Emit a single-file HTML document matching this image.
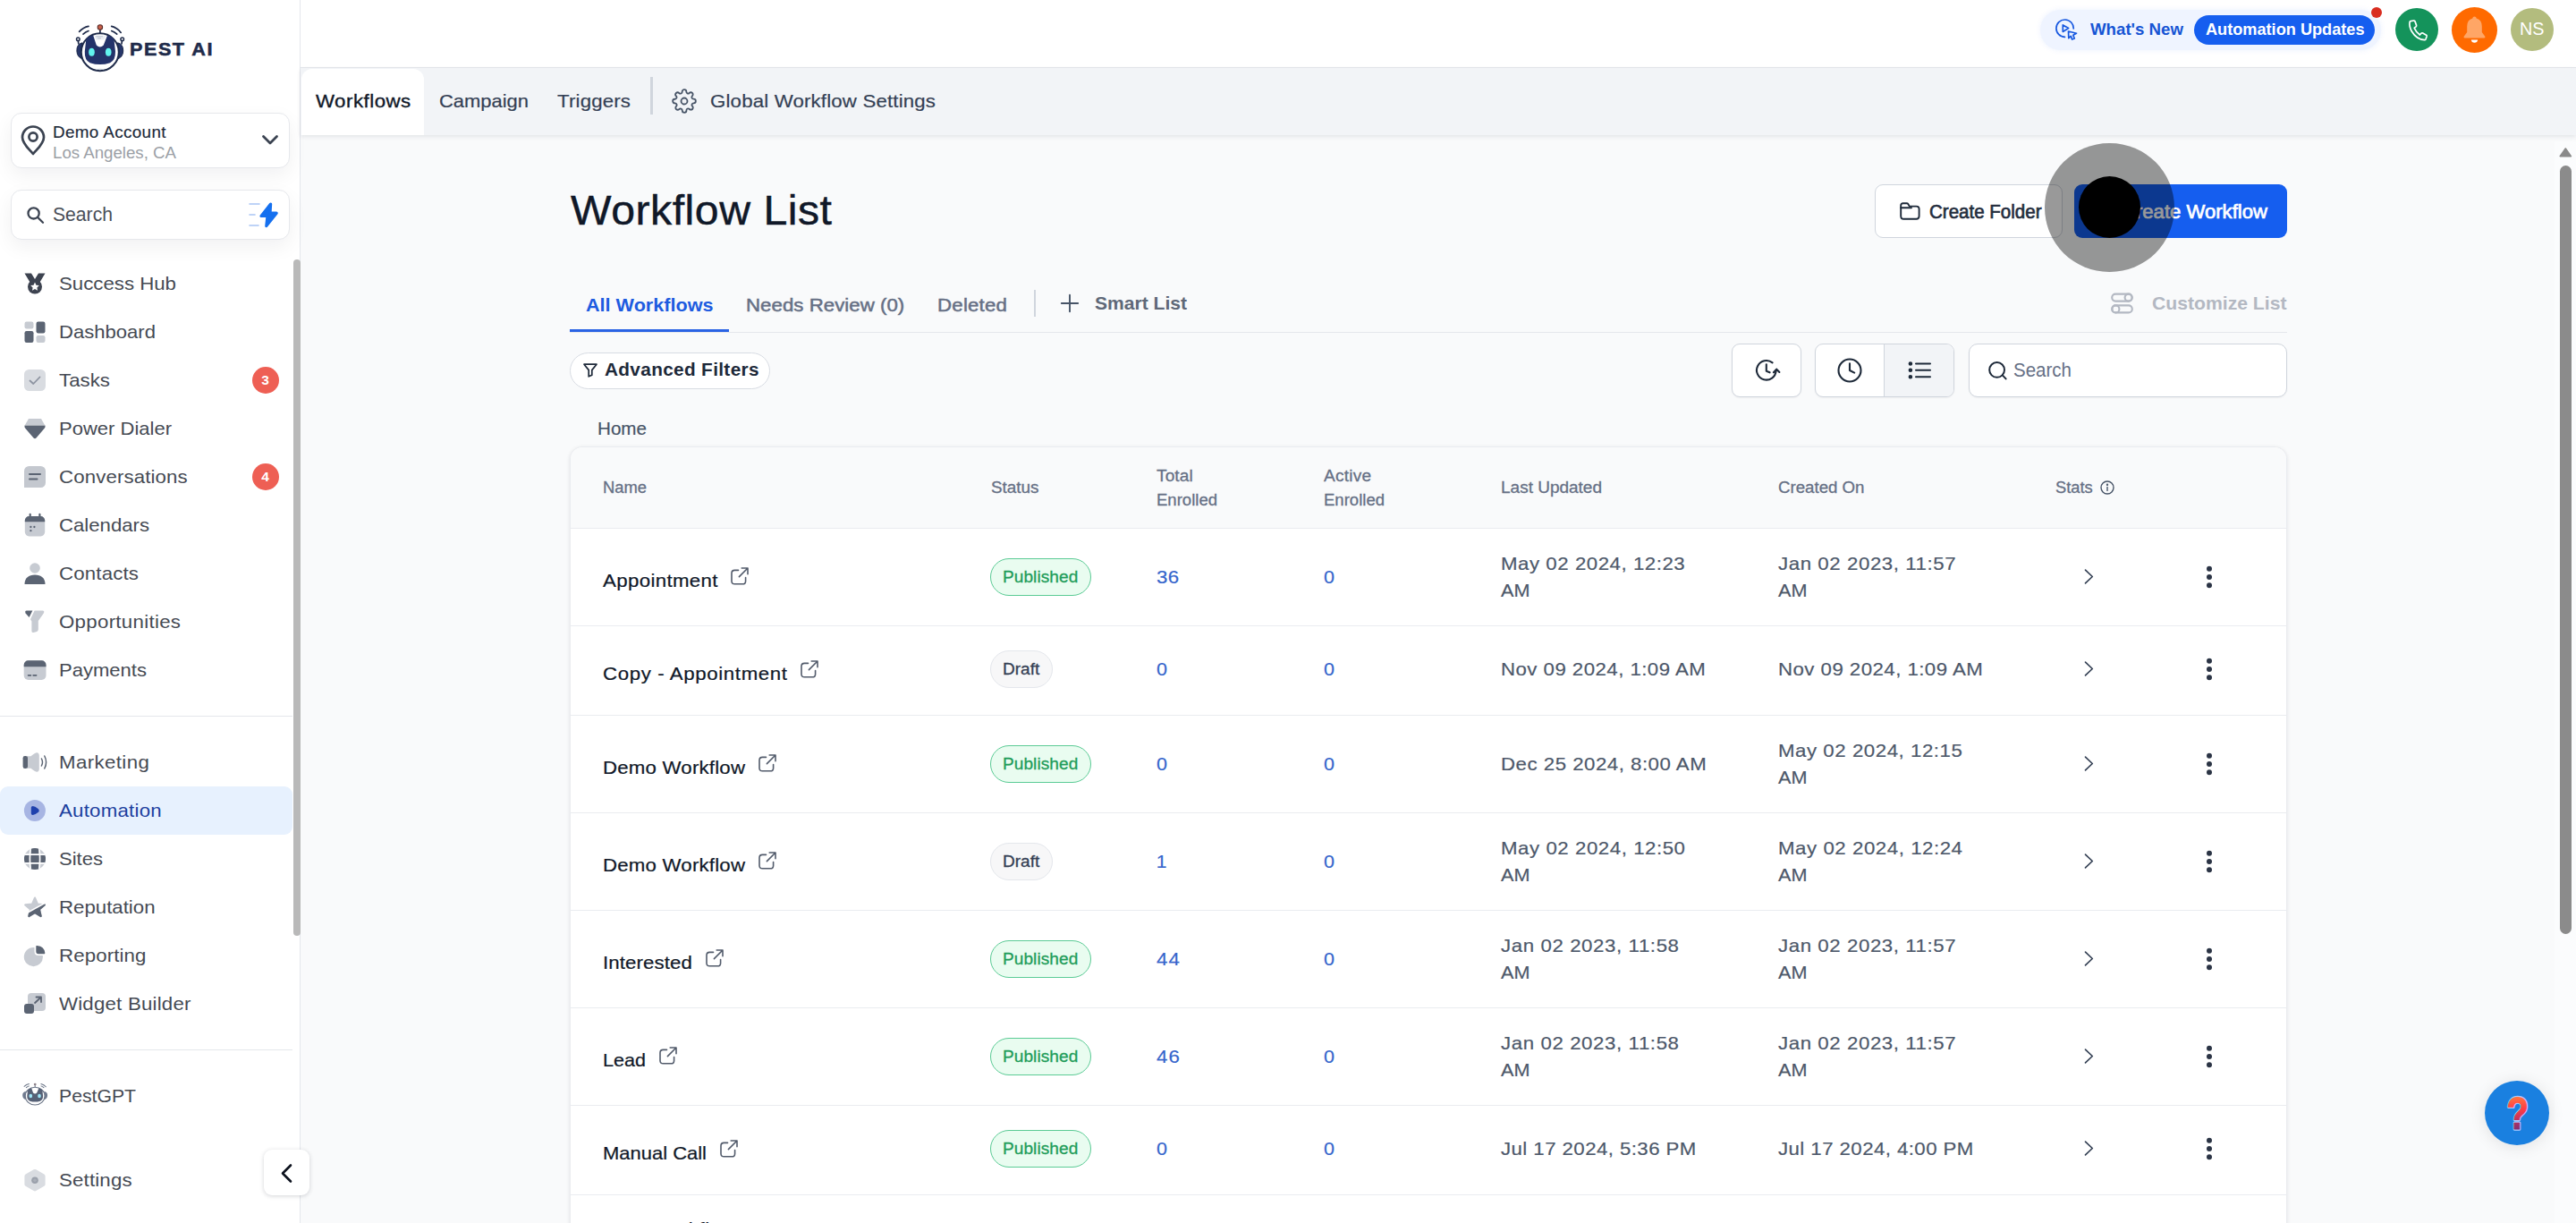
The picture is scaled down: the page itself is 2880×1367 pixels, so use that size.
<!DOCTYPE html>
<html lang="en"><head><meta charset="utf-8"><title>Workflow List</title>
<style>
*{box-sizing:border-box;margin:0;padding:0}
html,body{width:2880px;height:1367px;overflow:hidden;background:#f9fafb;font-family:"Liberation Sans",sans-serif;}
body{position:relative}
.t{position:absolute;white-space:nowrap;line-height:1;display:block;transform-origin:0 0}
.a{position:absolute}
svg{position:absolute;overflow:visible}
#sb{left:0;top:0;width:336px;height:1367px;background:#fff;border-right:1px solid #e4e7ec}
#top{left:336px;top:0;width:2544px;height:76px;background:#fff;border-bottom:1px solid #e4e7ec}
#tabs{left:336px;top:76px;width:2544px;height:75px;background:#f2f4f7;box-shadow:0 2px 5px rgba(16,24,40,.09)}
#tabact{left:337px;top:77px;width:137px;height:74px;background:#fff;border-radius:12px 12px 0 0}
.box{background:#fff;border:1px solid #e6e8ec;border-radius:12px;box-shadow:0 8px 22px rgba(16,24,40,.06)}
.badge{border-radius:50%;background:#ee5f54;width:30px;height:30px}
.btn{background:#fff;border:1px solid #d0d5dd;border-radius:9px}
.pill{border-radius:999px}
.hl{left:0;top:879px;width:327px;height:54px;background:#e7f1fe;border-radius:9px}
.div{height:1px;background:#e4e7ec}
#tbl{left:637px;top:499px;width:1920px;height:900px;background:#fff;border:1px solid #eaecf0;border-radius:14px 14px 0 0;box-shadow:0 1px 4px rgba(16,24,40,.10);overflow:hidden}
#thead{left:0;top:0;width:1920px;height:91px;background:#f9fafb;border-bottom:1px solid #eaecf0}
.rb{left:0;width:1920px;height:1px;background:#eaecf0}
.pub{background:#e9fcf0;border:1px solid #5bcb95;border-radius:999px;height:42px;width:113px}
.dr{background:#f7f7f8;border:1px solid #e4e7ec;border-radius:999px;height:42px;width:70px}
</style></head><body>
<div id="sb" class="a"></div>
<svg style="left:85px;top:27px" width="54" height="54" viewBox="0 0 54 54">
<g fill="none" stroke="#1f2b4a" stroke-width="1.7" stroke-linecap="round">
<path d="M3.6 8.4 Q8 3.6 14 2.4"></path><path d="M8 11.2 Q10.6 8.6 14 7.5"></path>
<path d="M50.2 9.4 Q46 4 39.7 2.4"></path><path d="M45.7 11.2 Q43 8.6 39.7 7.5"></path>
<line x1="26.9" y1="6" x2="26.9" y2="10"></line><line x1="2.4" y1="18.6" x2="2.8" y2="22"></line><line x1="51.4" y1="18.6" x2="51" y2="22"></line>
</g>
<path d="M7 20.8 Q0.6 22.4 0.9 30 Q1.2 37 7 38.8 Z" fill="#27376a" stroke="#1f2b4a" stroke-width="1"></path>
<path d="M46.6 20.8 Q53 22.4 52.7 30 Q52.4 37 46.6 38.8 Z" fill="#27376a" stroke="#1f2b4a" stroke-width="1"></path>
<circle cx="26.8" cy="31.2" r="21" fill="#fff" stroke="#1f2b4a" stroke-width="2"></circle>
<path d="M11.2 18 Q12.6 13.4 19.2 12.6 L22.8 23.5 Q26.8 27.6 30.8 23.5 L35 12.6 Q41.2 13.4 42.6 18 L44 30.5 Q44.2 40.5 38 43.2 Q26.8 47 15.6 43.2 Q9.4 40.5 9.8 30.5 Z" fill="#24336a"></path>
<path d="M20.6 12.4 L33.6 12.4 L31.4 17.4 L22.2 17.4 Z" fill="#e9edf3"></path>
<path d="M22.4 13.8 H30 M24.2 15.8 H28" stroke="#aab3c2" stroke-width=".7" fill="none"></path>
<ellipse cx="17.5" cy="31.2" rx="3.3" ry="4.5" fill="#62f4ee"></ellipse>
<ellipse cx="36.2" cy="31.2" rx="3.3" ry="4.5" fill="#62f4ee"></ellipse>
<path d="M23 50.6 Q26.8 49.8 30.6 50.6" stroke="#c9ced8" stroke-width="1" fill="none" stroke-linecap="round"></path>
<circle cx="26.9" cy="3.5" r="2.7" fill="#c9604a" stroke="#5a2d2a" stroke-width="1.1"></circle>
<circle cx="2.3" cy="16.8" r="1.8" fill="#fff" stroke="#1f2b4a" stroke-width="1.5"></circle><circle cx="51.7" cy="16.8" r="1.8" fill="#fff" stroke="#1f2b4a" stroke-width="1.5"></circle>
</svg>
<span class="t" style="left: 144.9px; top: 46.31px; font-size: 19.6px; color: rgb(31, 43, 74); font-weight: 700; -webkit-text-stroke: 0.55px rgb(31, 43, 74); letter-spacing: 1.432px; transform: scaleX(1.1);">PEST AI</span>
<div class="a box" style="left:11.75px;top:125.6px;width:312px;height:62px"></div>
<svg style="left:23px;top:140px" width="28" height="34" viewBox="0 0 28 34" fill="none" stroke="#3b4351" stroke-width="2.7" stroke-linejoin="round" stroke-linecap="round">
<path d="M14 32 C 10 27 2 21 2 13.5 A12 12 0 0 1 26 13.5 C26 21 18 27 14 32 Z"></path><circle cx="14" cy="13" r="4.6"></circle></svg>
<span class="t" style="left: 59px; top: 139.53px; font-size: 17.8px; color: rgb(29, 41, 57); -webkit-text-stroke: 0.15px rgb(29, 41, 57); letter-spacing: 0.336px; transform: scaleX(1.06);">Demo Account</span>
<span class="t" style="left: 59px; top: 162.16px; font-size: 18px; color: rgb(155, 159, 166); transform: scaleX(1.0369);">Los Angeles, CA</span>
<svg style="left:293px;top:151px" width="18" height="11" viewBox="0 0 18 11" fill="none" stroke="#3b4351" stroke-width="2.8" stroke-linecap="round" stroke-linejoin="round"><path d="M1.5 1.5 L9 9 L16.5 1.5"></path></svg>
<div class="a box" style="left:11.75px;top:211.8px;width:312px;height:56px"></div>
<svg style="left:30px;top:231px" width="20" height="19" viewBox="0 0 20 19" fill="none" stroke="#3b4351" stroke-width="2.3" stroke-linecap="round"><circle cx="7.6" cy="7.4" r="6.1"></circle><path d="M12.2 12 L18 17.8"></path></svg>
<span class="t" style="left: 59px; top: 229.8px; font-size: 21.5px; color: rgb(74, 79, 88); transform: scaleX(0.9835);">Search</span>
<svg style="left:278px;top:226px" width="34" height="29" viewBox="0 0 34 29">
<g stroke="#a9c5f5" stroke-width="1.6" stroke-linecap="round"><line x1="1" y1="2" x2="12" y2="2"></line><line x1="1" y1="14" x2="7" y2="14"></line><line x1="1" y1="26" x2="11" y2="26"></line></g>
<path d="M24.6 2 L14 15.4 L21 15.4 L19.8 26.6 L31.2 12.2 L24 12.2 Z" fill="#1570ef" stroke="#1570ef" stroke-width="3.2" stroke-linejoin="round"></path></svg>
<div class="a" style="left:328px;top:290px;width:8px;height:756px;background:#b9b9b9;border-radius:4px"></div>
<div class="a hl"></div>
<svg style="left:27px;top:305px" width="24" height="24" viewBox="0 0 24 24"><path d="M0.5 0.5 L8 0.5 L12 7 L16 0.5 L23.5 0.5 L17.5 10.5 L12 8.5 L6.5 10.5 Z" fill="#3d4350"></path><circle cx="12" cy="15.5" r="8" fill="#3d4350"></circle><path d="M12 10.6 l1.5 3.1 3.3.4 -2.4 2.3 .6 3.3 -3-1.6 -3 1.6 .6-3.3 -2.4-2.3 3.3-.4z" fill="#fff"></path></svg>
<span class="t" style="left: 66.4px; top: 306.22px; font-size: 21px; color: rgb(69, 74, 83); transform: scaleX(1.0587);">Success Hub</span>
<svg style="left:27px;top:359px" width="24" height="24" viewBox="0 0 24 24"><rect x="0.5" y="0.5" width="10" height="8" rx="2.2" fill="#c7cbd2"></rect><rect x="13.5" y="0.5" width="10" height="13" rx="2.2" fill="#5b6473"></rect><rect x="0.5" y="11" width="10" height="13" rx="2.2" fill="#5b6473"></rect><rect x="13.5" y="16" width="10" height="8" rx="2.2" fill="#c7cbd2"></rect></svg>
<span class="t" style="left: 66.4px; top: 360.22px; font-size: 21px; color: rgb(69, 74, 83); transform: scaleX(1.0513);">Dashboard</span>
<svg style="left:27px;top:413px" width="24" height="24" viewBox="0 0 24 24"><rect x="0" y="0" width="24" height="24" rx="5.5" fill="#d9dce1"></rect><path d="M6.5 12.5 L10.3 16 L17.5 8.5" fill="none" stroke="#8d94a1" stroke-width="1.8" stroke-linecap="round" stroke-linejoin="round"></path></svg>
<span class="t" style="left: 66.4px; top: 414.22px; font-size: 21px; color: rgb(69, 74, 83); letter-spacing: 0.022px; transform: scaleX(1.06);">Tasks</span>
<svg style="left:27px;top:467px" width="24" height="24" viewBox="0 0 24 24"><path d="M5 1 L19 1 L23 8 L1 8 Z" fill="#c7cbd2"></path><path d="M0.5 8.5 L23.5 8.5 Q24 10.5 22.5 12 L13.5 22.5 Q12 24 10.5 22.5 L1.5 12 Q0 10.5 .5 8.5Z" fill="#5b6473"></path></svg>
<span class="t" style="left: 66.4px; top: 468.22px; font-size: 21px; color: rgb(69, 74, 83); transform: scaleX(1.0481);">Power Dialer</span>
<svg style="left:27px;top:521px" width="24" height="24" viewBox="0 0 24 24"><path d="M5.5 0 H18.5 A5.5 5.5 0 0 1 24 5.5 V18.5 A5.5 5.5 0 0 1 18.5 24 H0 V5.5 A5.5 5.5 0 0 1 5.5 0Z" fill="#c4c8cf"></path><path d="M6 9 H18 M6 14.5 H14.5" stroke="#5b6473" stroke-width="2" stroke-linecap="round"></path></svg>
<span class="t" style="left: 66.4px; top: 522.22px; font-size: 21px; color: rgb(69, 74, 83); letter-spacing: 0.115px; transform: scaleX(1.06);">Conversations</span>
<svg style="left:27px;top:575px" width="24" height="24" viewBox="0 0 24 24"><rect x="0.8" y="2" width="22.4" height="22.4" rx="4.8" fill="#c7cbd2"></rect><path d="M5.6 2 H18.4 A4.8 4.8 0 0 1 23.2 6.8 V8.2 H0.8 V6.8 A4.8 4.8 0 0 1 5.6 2Z" fill="#5b6473"></path><path d="M6.7 -.2 V4 M17.4 -.2 V4" stroke="#5b6473" stroke-width="2.2" stroke-linecap="round"></path><circle cx="7.4" cy="14" r="1.15" fill="#5b6473"></circle><circle cx="11.4" cy="14" r="1.15" fill="#5b6473"></circle><circle cx="7.4" cy="18.2" r="1.15" fill="#5b6473"></circle></svg>
<span class="t" style="left: 66.4px; top: 576.22px; font-size: 21px; color: rgb(69, 74, 83); transform: scaleX(1.055);">Calendars</span>
<svg style="left:27px;top:629px" width="24" height="24" viewBox="0 0 24 24"><circle cx="12" cy="6" r="5.8" fill="#c7cbd2"></circle><path d="M0.5 24 C0.5 17 5 13.5 12 13.5 C19 13.5 23.5 17 23.5 24 Z" fill="#5b6473"></path></svg>
<span class="t" style="left: 66.4px; top: 630.22px; font-size: 21px; color: rgb(69, 74, 83); letter-spacing: 0.155px; transform: scaleX(1.06);">Contacts</span>
<svg style="left:27px;top:683px" width="24" height="24" viewBox="0 0 24 24"><path d="M11.6 -.4 H20.6 Q23.2 -.2 21.8 2.4 L15.8 11 V20.6 Q15.8 22.4 14.2 23 L10.6 24 Q8.4 24.4 8.4 22.2 V11.6 L7 9.2 Z" fill="#c7cbd2"></path><path d="M2.8 -.4 H9.4 L5.6 7 L1.6 2.4 Q.4 -.2 2.8 -.4 Z" fill="#5b6473"></path></svg>
<span class="t" style="left: 66.4px; top: 684.22px; font-size: 21px; color: rgb(69, 74, 83); letter-spacing: 0.283px; transform: scaleX(1.06);">Opportunities</span>
<svg style="left:27px;top:737px" width="24" height="24" viewBox="0 0 24 24"><rect x="-.3" y="1.3" width="24.8" height="21.7" rx="5" fill="#c7cbd2"></rect><path d="M4.7 1.3 H19.5 A5 5 0 0 1 24.5 6.3 V8.2 H-.3 V6.3 A5 5 0 0 1 4.7 1.3Z" fill="#5b6473"></path><path d="M4.6 17.8 H7.4 M10.2 17.8 H13.6" stroke="#5b6473" stroke-width="1.7" stroke-linecap="round"></path></svg>
<span class="t" style="left: 66.4px; top: 738.22px; font-size: 21px; color: rgb(69, 74, 83); transform: scaleX(1.0495);">Payments</span>
<svg style="left:27px;top:840.2px" width="24" height="24" viewBox="0 0 24 24"><path d="M3 5.2 H7.5 Q12.5 1.2 14.2 1.3 Q16.8 1.6 16.8 4.5 V19.5 Q16.8 22.4 14.2 22.7 Q12.5 22.8 7.5 18.8 H3 Z" fill="#c7cbd2"></path><rect x="-1.4" y="5" width="5.4" height="14" rx="2.2" fill="#5b6473"></rect><path d="M19.4 8 Q21.6 12 19.4 16 M22.8 5 Q26.4 12 22.8 19" fill="none" stroke="#5b6473" stroke-width="1.5" stroke-linecap="round"></path></svg>
<span class="t" style="left: 66.4px; top: 841.42px; font-size: 21px; color: rgb(69, 74, 83); letter-spacing: 0.361px; transform: scaleX(1.06);">Marketing</span>
<svg style="left:27px;top:894.2px" width="24" height="24" viewBox="0 0 24 24"><circle cx="11.9" cy="12" r="12" fill="#a7b5e3"></circle><path d="M7.8 8.8 Q7.8 7 9.6 7 Q12.2 7 15.6 9.9 Q17.8 12 15.6 14.1 Q12.2 17 9.6 17 Q7.8 17 7.8 15.2 Z" fill="#1f40ad"></path></svg>
<span class="t" style="left: 66.4px; top: 895.42px; font-size: 21px; color: rgb(28, 63, 158); letter-spacing: 0.219px; transform: scaleX(1.06);">Automation</span>
<svg style="left:27px;top:948.2px" width="24" height="24" viewBox="0 0 24 24"><defs><clipPath id="gcl"><circle cx="12" cy="12" r="12"></circle></clipPath></defs><g clip-path="url(#gcl)"><rect x="0" y="0" width="24" height="24" fill="#c7cbd2"></rect><rect x="7.6" y="0" width="8.8" height="24" fill="#5b6473"></rect><rect x="0" y="7.6" width="24" height="8.8" fill="#5b6473"></rect><path d="M7.2 0 Q5.6 12 7.2 24 M16.8 0 Q18.4 12 16.8 24 M0 7.2 H24 M0 16.8 H24" stroke="#fff" stroke-width="1.7" fill="none"></path></g></svg>
<span class="t" style="left: 66.4px; top: 949.42px; font-size: 21px; color: rgb(69, 74, 83); transform: scaleX(1.0495);">Sites</span>
<svg style="left:27px;top:1002.2px" width="24" height="24" viewBox="0 0 24 24"><defs><clipPath id="scl"><path d="M-2 27 L-2 21.2 L27 5.4 L27 27 Z"></path></clipPath></defs><path d="M12.00 1.60 L15.06 8.69 L22.75 9.41 L16.95 14.51 L18.64 22.04 L12.00 18.10 L5.36 22.04 L7.05 14.51 L1.25 9.41 L8.94 8.69 Z" fill="#c7cbd2" stroke="#c7cbd2" stroke-width="2.2" stroke-linejoin="round"></path><g clip-path="url(#scl)"><path d="M12.00 1.60 L15.06 8.69 L22.75 9.41 L16.95 14.51 L18.64 22.04 L12.00 18.10 L5.36 22.04 L7.05 14.51 L1.25 9.41 L8.94 8.69 Z" fill="#5b6473" stroke="#5b6473" stroke-width="2.2" stroke-linejoin="round"></path></g><path d="M-2 21.2 L27 5.4" stroke="#fff" stroke-width="1.6"></path></svg>
<span class="t" style="left: 66.4px; top: 1003.42px; font-size: 21px; color: rgb(69, 74, 83); transform: scaleX(1.0583);">Reputation</span>
<svg style="left:27px;top:1056.2px" width="24" height="24" viewBox="0 0 24 24"><circle cx="10.4" cy="13.6" r="10.6" fill="#c7cbd2"></circle><path d="M14.6 0 Q23.6 1 24.2 9 Q24.3 11.2 22 11.2 H16 Q12.4 11.2 12.4 7.6 V2.2 Q12.4 -.2 14.6 0Z" fill="#5b6473" stroke="#fff" stroke-width="1.8"></path></svg>
<span class="t" style="left: 66.4px; top: 1057.42px; font-size: 21px; color: rgb(69, 74, 83); letter-spacing: 0.115px; transform: scaleX(1.06);">Reporting</span>
<svg style="left:27px;top:1110.2px" width="24" height="24" viewBox="0 0 24 24"><rect x="4" y="0" width="20" height="20" rx="4" fill="#c7cbd2"></rect><rect x="0" y="12" width="11" height="11" rx="3" fill="#5b6473"></rect><path d="M12 11 L19 4.5 M13.5 4.5 H19 V10" fill="none" stroke="#5b6473" stroke-width="1.8" stroke-linecap="round" stroke-linejoin="round"></path></svg>
<span class="t" style="left: 66.4px; top: 1111.42px; font-size: 21px; color: rgb(69, 74, 83); letter-spacing: 0.192px; transform: scaleX(1.06);">Widget Builder</span>
<svg style="left:27px;top:1212.5px" width="24" height="24" viewBox="0 0 24 24"><g transform="translate(-1.8,-2.6) scale(0.52,0.47)"><g fill="none" stroke="#6a7486" stroke-width="2" stroke-linecap="round"><path d="M3.6 8.4 Q8 3.6 14 2.4"></path><path d="M8 11.2 Q10.6 8.6 14 7.5"></path><path d="M50.2 9.4 Q46 4 39.7 2.4"></path><path d="M45.7 11.2 Q43 8.6 39.7 7.5"></path><line x1="26.9" y1="6" x2="26.9" y2="10"></line></g><path d="M7 19.8 Q-0.6 22 0 30 Q0.4 38 7 40 Z" fill="#6f7a8f"></path><path d="M46.6 19.8 Q54.2 22 53.6 30 Q53.2 38 46.6 40 Z" fill="#6f7a8f"></path><circle cx="26.8" cy="31.2" r="21" fill="#fff" stroke="#6a7486" stroke-width="2.2"></circle><path d="M11.2 18 Q12.6 13.4 19.2 12.6 L22.8 23.5 Q26.8 27.6 30.8 23.5 L35 12.6 Q41.2 13.4 42.6 18 L44 30.5 Q44.2 40.5 38 43.2 Q26.8 47 15.6 43.2 Q9.4 40.5 9.8 30.5 Z" fill="#566176"></path><ellipse cx="17.5" cy="31.2" rx="3.5" ry="4.8" fill="#9fe6f7"></ellipse><ellipse cx="36.2" cy="31.2" rx="3.5" ry="4.8" fill="#9fe6f7"></ellipse><circle cx="26.9" cy="3.5" r="2.7" fill="#8a7f86"></circle></g></svg>
<span class="t" style="left: 66.4px; top: 1213.72px; font-size: 21px; color: rgb(69, 74, 83); transform: scaleX(1.0094);">PestGPT</span>
<svg style="left:27px;top:1306.8px" width="24" height="24" viewBox="0 0 24 24"><path d="M12 -.4 L22.4 5.6 Q23.6 6.3 23.6 7.7 V16.7 Q23.6 18.1 22.4 18.8 L13.3 24.1 Q12 24.8 10.7 24.1 L1.6 18.8 Q.4 18.1 .4 16.7 V7.7 Q.4 6.3 1.6 5.6 L10.7 .3 Q12 -.4 13.3 .3Z" fill="#d9dce1"></path><circle cx="12" cy="12.2" r="3.8" fill="#9aa0ab"></circle><circle cx="12" cy="12.2" r="1.8" fill="#a9aeb8"></circle></svg>
<span class="t" style="left: 66.4px; top: 1308.02px; font-size: 21px; color: rgb(69, 74, 83); letter-spacing: 0.156px; transform: scaleX(1.06);">Settings</span>
<div class="a badge" style="left:281.5px;top:410px"></div>
<span class="t" style="left:292.3px;top:417.48px;font-size:15.5px;color:#fff;font-weight:700;">3</span>
<div class="a badge" style="left:281.5px;top:518px"></div>
<span class="t" style="left:292.3px;top:525.48px;font-size:15.5px;color:#fff;font-weight:700;">4</span>
<div class="a div" style="left:0;top:800px;width:327px"></div>
<div class="a div" style="left:0;top:1173px;width:327px"></div>
<div id="top" class="a"></div>
<div id="tabs" class="a"></div>
<div id="tabact" class="a"></div>
<div class="a pill" style="left:2281px;top:11px;width:381px;height:45px;background:#eff4ff;box-shadow:0 0 6px rgba(21,94,239,.08)"></div>
<svg style="left:2298px;top:21px" width="25" height="24" viewBox="0 0 25 24" fill="none" stroke="#1758e0" stroke-width="1.7" stroke-linecap="round" stroke-linejoin="round">
<path d="M10.5 20.4 A9.7 9.7 0 1 1 20.3 11"></path><path d="M8.3 6.9 L14.6 10.6 L8.3 14.4 Z"></path><path d="M14.5 14 L23.5 16.3 L19.8 18.3 L21.3 22 L18.6 23 L17.3 19.4 L14.8 21.6 Z"></path></svg>
<span class="t" style="left: 2336.5px; top: 24.42px; font-size: 18.4px; color: rgb(22, 84, 212); font-weight: 700; transform: scaleX(1.0149);">What's New</span>
<div class="a pill" style="left:2453px;top:17px;width:202px;height:32.5px;background:#155eef"></div>
<span class="t" style="left: 2465.5px; top: 24.12px; font-size: 18.4px; color: rgb(255, 255, 255); font-weight: 700; transform: scaleX(0.9871);">Automation Updates</span>
<div class="a" style="left:2651px;top:8px;width:12px;height:12px;border-radius:50%;background:#d92d20"></div>
<div class="a" style="left:2678px;top:9px;width:48px;height:48px;border-radius:50%;background:#14935b"></div>
<svg style="left:2692px;top:22px" width="22" height="24" viewBox="0 0 22 24" fill="none" stroke="#fff" stroke-width="1.7" stroke-linecap="round" stroke-linejoin="round">
<path d="M3.2 1.6 L6.6 1 Q7.6 .9 8 1.9 L9.6 6.4 Q9.9 7.3 9.1 7.9 L7.2 9.3 Q9.3 14 13.4 17 L15.1 15.2 Q15.8 14.5 16.7 15 L20.6 17.3 Q21.4 17.9 21.1 18.8 L20 21.8 Q19.6 22.7 18.6 22.7 Q9.5 21.8 4.3 13 Q1.2 7.5 2.1 2.7 Q2.3 1.8 3.2 1.6Z"></path></svg>
<div class="a" style="left:2741px;top:8px;width:51px;height:51px;border-radius:50%;background:#ff6a00"></div>
<svg style="left:2753px;top:18px" width="27" height="31" viewBox="0 0 27 31"><path d="M13.5 0.5 Q15.5 .5 15.7 2.6 Q21.8 4.3 21.8 11.5 V18 L25.3 22.8 Q26 24.2 24.5 24.5 H2.5 Q1 24.2 1.7 22.8 L5.2 18 V11.5 Q5.2 4.3 11.3 2.6 Q11.5 .5 13.5 .5Z" fill="#ffa666"></path><path d="M9.8 26.5 H17.2 Q16.6 29.8 13.5 29.8 Q10.4 29.8 9.8 26.5Z" fill="#fff"></path></svg>
<div class="a" style="left:2807px;top:9px;width:48px;height:48px;border-radius:50%;background:#b3bc7e"></div>
<span class="t" style="left: 2816.5px; top: 23.19px; font-size: 19.5px; color: rgb(255, 255, 255); transform: scaleX(1.015);">NS</span>
<span class="t" style="left: 352.5px; top: 102.22px; font-size: 21px; color: rgb(16, 24, 40); -webkit-text-stroke: 0.35px rgb(16, 24, 40); letter-spacing: 0.471px; transform: scaleX(1.06);">Workflows</span>
<span class="t" style="left: 491px; top: 102.22px; font-size: 21px; color: rgb(52, 64, 84); -webkit-text-stroke: 0.2px rgb(52, 64, 84); transform: scaleX(1.0446);">Campaign</span>
<span class="t" style="left: 623px; top: 102.22px; font-size: 21px; color: rgb(52, 64, 84); -webkit-text-stroke: 0.2px rgb(52, 64, 84); letter-spacing: 0.158px; transform: scaleX(1.06);">Triggers</span>
<div class="a" style="left:727px;top:86px;width:3px;height:42px;background:#d0d5dd"></div>
<svg style="left:751px;top:99px" width="28" height="28" viewBox="0 0 24 24" fill="none" stroke="#475467" stroke-width="1.55" stroke-linecap="round" stroke-linejoin="round">
<circle cx="12" cy="12" r="3"></circle><path d="M19.4 15a1.65 1.65 0 0 0 .33 1.82l.06.06a2 2 0 1 1-2.83 2.83l-.06-.06a1.65 1.65 0 0 0-1.82-.33 1.65 1.65 0 0 0-1 1.51V21a2 2 0 0 1-4 0v-.09A1.65 1.65 0 0 0 9 19.4a1.65 1.65 0 0 0-1.82.33l-.06.06a2 2 0 1 1-2.83-2.83l.06-.06a1.65 1.65 0 0 0 .33-1.82 1.65 1.65 0 0 0-1.51-1H3a2 2 0 0 1 0-4h.09A1.65 1.65 0 0 0 4.6 9a1.65 1.65 0 0 0-.33-1.82l-.06-.06a2 2 0 1 1 2.83-2.83l.06.06a1.65 1.65 0 0 0 1.82.33H9a1.65 1.65 0 0 0 1-1.51V3a2 2 0 0 1 4 0v.09a1.65 1.65 0 0 0 1 1.51 1.65 1.65 0 0 0 1.82-.33l.06-.06a2 2 0 1 1 2.83 2.83l-.06.06a1.65 1.65 0 0 0-.33 1.82V9a1.65 1.65 0 0 0 1.51 1H21a2 2 0 0 1 0 4h-.09a1.65 1.65 0 0 0-1.51 1z"></path></svg>
<span class="t" style="left: 794px; top: 102.22px; font-size: 21px; color: rgb(52, 64, 84); -webkit-text-stroke: 0.2px rgb(52, 64, 84); letter-spacing: 0.153px; transform: scaleX(1.06);">Global Workflow Settings</span>
<span class="t" style="left: 638px; top: 213.48px; font-size: 45.5px; color: rgb(16, 24, 40); -webkit-text-stroke: 0.45px rgb(16, 24, 40); letter-spacing: 0.481px; transform: scaleX(1.06);">Workflow List</span>
<div class="a btn" style="left:2096px;top:206px;width:210px;height:60px"></div>
<svg style="left:2124px;top:226px" width="23" height="20" viewBox="0 0 23 20" fill="none" stroke="#1d2939" stroke-width="1.9" stroke-linejoin="round" stroke-linecap="round"><path d="M1.2 6.2 V3.6 Q1.2 1.2 3.6 1.2 H7.8 Q8.8 1.2 9.3 2 L10.8 4.6 H18.6 Q21.6 4.6 21.6 7.6 V15.6 Q21.6 18.8 18.6 18.8 H4.2 Q1.2 18.8 1.2 15.6 Z"></path><path d="M1.2 6.2 H13"></path></svg>
<span class="t" style="left: 2157px; top: 227.47px; font-size: 21.3px; color: rgb(35, 45, 61); -webkit-text-stroke: 0.65px rgb(35, 45, 61); transform: scaleX(0.9638);">Create Folder</span>
<div class="a" style="left:2319px;top:206px;width:238px;height:60px;border-radius:9px;background:#155eef"></div>
<span class="t" style="left: 2372px; top: 227.47px; font-size: 21.3px; color: rgb(255, 255, 255); -webkit-text-stroke: 0.7px rgb(255, 255, 255); transform: scaleX(1.0381);">Create Workflow</span>
<div class="a div" style="left:637px;top:371px;width:1920px;background:#e4e7ec"></div>
<div class="a" style="left:637px;top:368px;width:178px;height:3px;background:#2a63e4"></div>
<span class="t" style="left: 655px; top: 330.22px; font-size: 21px; color: rgb(29, 91, 224); font-weight: 700; transform: scaleX(1.0291);">All Workflows</span>
<span class="t" style="left: 833.75px; top: 330.22px; font-size: 21px; color: rgb(102, 112, 133); -webkit-text-stroke: 0.5px rgb(102, 112, 133); letter-spacing: 0.021px; transform: scaleX(1.06);">Needs Review (0)</span>
<span class="t" style="left: 1048px; top: 330.22px; font-size: 21px; color: rgb(102, 112, 133); -webkit-text-stroke: 0.5px rgb(102, 112, 133); letter-spacing: 0.199px; transform: scaleX(1.06);">Deleted</span>
<div class="a" style="left:1156px;top:324px;width:1.5px;height:30px;background:#d0d5dd"></div>
<svg style="left:1186px;top:329px" width="20" height="20" viewBox="0 0 20 20" stroke="#475467" stroke-width="1.9" stroke-linecap="round"><path d="M10 0.8 V19.2 M0.8 10 H19.2"></path></svg>
<span class="t" style="left: 1223.7px; top: 328.22px; font-size: 21px; color: rgb(95, 104, 120); font-weight: 700; transform: scaleX(1.0029);">Smart List</span>
<svg style="left:2360px;top:327px" width="25" height="24" viewBox="0 0 25 24" fill="none" stroke="#b3b8c2" stroke-width="2.1">
<rect x="1.2" y="1.6" width="22.6" height="8" rx="4"></rect><circle cx="19.6" cy="5.6" r="4"></circle><rect x="1.2" y="14.4" width="22.6" height="8" rx="4"></rect><circle cx="5.4" cy="18.4" r="4"></circle></svg>
<span class="t" style="left: 2405.5px; top: 327.97px; font-size: 21px; color: rgb(179, 184, 194); font-weight: 700; transform: scaleX(1.0076);">Customize List</span>
<div class="a pill" style="left:637px;top:393.75px;width:224px;height:41px;background:#fff;border:1px solid #d8dce3"></div>
<svg style="left:652px;top:406px" width="16" height="16" viewBox="0 0 16 16" fill="none" stroke="#1d2939" stroke-width="1.7" stroke-linejoin="round"><path d="M1 1.2 H15 L9.8 7.6 V13.2 L6.2 14.8 V7.6 Z"></path></svg>
<span class="t" style="left: 675.5px; top: 403.91px; font-size: 19.6px; color: rgb(29, 41, 57); font-weight: 700; letter-spacing: 0.323px; transform: scaleX(1.06);">Advanced Filters</span>
<div class="a btn" style="left:1936px;top:384px;width:78px;height:60px;box-shadow:0 1px 2px rgba(16,24,40,.05)"></div>
<svg style="left:1962px;top:401px" width="28" height="26" viewBox="0 0 28 26" fill="none" stroke="#1d2939" stroke-width="2.1" stroke-linecap="round" stroke-linejoin="round">
<path d="M19.6 4.4 A10.8 10.8 0 1 0 23.6 13.4"></path><path d="M12.8 6.2 V13.8 L16.6 15.3"></path><path d="M20.9 15.2 L24.2 11.6 L27.4 15"></path></svg>
<div class="a btn" style="left:2029px;top:384px;width:156px;height:60px;box-shadow:0 1px 2px rgba(16,24,40,.05);overflow:hidden"><div class="a" style="left:76px;top:0;width:80px;height:60px;background:#f2f4f7;border-left:1px solid #d0d5dd"></div></div>
<svg style="left:2054px;top:400px" width="28" height="28" viewBox="0 0 28 28" fill="none" stroke="#1d2939" stroke-width="2.1" stroke-linecap="round" stroke-linejoin="round"><circle cx="14" cy="14" r="12.5"></circle><path d="M14 6.4 V14 L19.2 16.6"></path></svg>
<svg style="left:2133px;top:403px" width="26" height="22" viewBox="0 0 26 22" fill="#1d2939" stroke="#1d2939" stroke-width="2" stroke-linecap="round"><path d="M9 3.5 H25 M9 10.8 H25 M9 18.2 H25"></path><circle cx="2.9" cy="3.5" r="1.3"></circle><circle cx="2.9" cy="10.8" r="1.3"></circle><circle cx="2.9" cy="18.2" r="1.3"></circle></svg>
<div class="a btn" style="left:2201px;top:384px;width:356px;height:60px;box-shadow:0 1px 2px rgba(16,24,40,.05);border-radius:10px"></div>
<svg style="left:2223px;top:403px" width="21" height="22" viewBox="0 0 21 22" fill="none" stroke="#1d2939" stroke-width="2" stroke-linecap="round"><circle cx="9.6" cy="10.4" r="8.4"></circle><path d="M15.8 16.4 L19.6 20.4"></path></svg>
<span class="t" style="left: 2251px; top: 402.95px; font-size: 22.5px; color: rgb(102, 112, 133); transform: scaleX(0.9117);">Search</span>
<span class="t" style="left: 667.5px; top: 468.47px; font-size: 21px; color: rgb(71, 84, 103); -webkit-text-stroke: 0.2px rgb(71, 84, 103); transform: scaleX(0.9816);">Home</span>
<div id="tbl" class="a"><div id="thead" class="a"></div>
<span class="t" style="left: 36px; top: 36.01px; font-size: 18px; color: rgb(102, 112, 133); -webkit-text-stroke: 0.3px rgb(102, 112, 133); transform: scaleX(1.0205);">Name</span>
<span class="t" style="left: 469.5px; top: 36.01px; font-size: 18px; color: rgb(102, 112, 133); -webkit-text-stroke: 0.3px rgb(102, 112, 133); transform: scaleX(1.0484);">Status</span>
<span class="t" style="left: 654.75px; top: 22.76px; font-size: 18px; color: rgb(102, 112, 133); -webkit-text-stroke: 0.3px rgb(102, 112, 133); letter-spacing: 0.103px; transform: scaleX(1.06);">Total</span>
<span class="t" style="left: 654.75px; top: 49.76px; font-size: 18px; color: rgb(102, 112, 133); -webkit-text-stroke: 0.3px rgb(102, 112, 133); transform: scaleX(1.0296);">Enrolled</span>
<span class="t" style="left: 841.5px; top: 22.76px; font-size: 18px; color: rgb(102, 112, 133); -webkit-text-stroke: 0.3px rgb(102, 112, 133); letter-spacing: 0.241px; transform: scaleX(1.06);">Active</span>
<span class="t" style="left: 841.5px; top: 49.76px; font-size: 18px; color: rgb(102, 112, 133); -webkit-text-stroke: 0.3px rgb(102, 112, 133); transform: scaleX(1.0296);">Enrolled</span>
<span class="t" style="left: 1039.75px; top: 36.01px; font-size: 18px; color: rgb(102, 112, 133); -webkit-text-stroke: 0.3px rgb(102, 112, 133); transform: scaleX(1.0553);">Last Updated</span>
<span class="t" style="left: 1350px; top: 36.01px; font-size: 18px; color: rgb(102, 112, 133); -webkit-text-stroke: 0.3px rgb(102, 112, 133); transform: scaleX(1.0369);">Created On</span>
<span class="t" style="left: 1660.25px; top: 36.01px; font-size: 18px; color: rgb(102, 112, 133); -webkit-text-stroke: 0.3px rgb(102, 112, 133); transform: scaleX(1.0175);">Stats</span>
<svg style="left:1710px;top:37px" width="16" height="16" viewBox="0 0 16 16" fill="none" stroke="#475467" stroke-width="1.4" stroke-linecap="round"><circle cx="8" cy="8" r="7"></circle><path d="M8 7.4 V11.4"></path><circle cx="8" cy="4.8" r=".5" fill="#475467"></circle></svg>
<div class="a rb" style="top:199.00px"></div>
<span class="t" style="left: 36px; top: 137.72px; font-size: 21px; color: rgb(16, 24, 40); -webkit-text-stroke: 0.22px rgb(16, 24, 40); letter-spacing: 0.33px; transform: scaleX(1.06);">Appointment</span>
<svg style="left:179.0px;top:133.8px" width="20" height="20" viewBox="0 0 20 20" fill="none" stroke="#525b6b" stroke-width="1.6" stroke-linecap="round" stroke-linejoin="round"><path d="M16.6 11.5 V15.4 Q16.6 18.8 13.2 18.8 H4.4 Q1 18.8 1 15.4 V6.8 Q1 3.4 4.4 3.4 H8.5"></path><path d="M12.2 1 H19 V7.8 M19 1 L9.4 10.6"></path></svg>
<div class="a pub" style="left:468.75px;top:123.75px"></div>
<span class="t" style="left: 483.25px; top: 135.51px; font-size: 18px; color: rgb(31, 157, 90); -webkit-text-stroke: 0.3px rgb(31, 157, 90); letter-spacing: 0.052px; transform: scaleX(1.06);">Published</span>
<span class="t" style="left: 654.75px; top: 133.97px; font-size: 21px; color: rgb(53, 101, 204); -webkit-text-stroke: 0.2px rgb(53, 101, 204); letter-spacing: 0.461px; transform: scaleX(1.06);">36</span>
<span class="t" style="left: 841.5px; top: 133.97px; font-size: 21px; color: rgb(53, 101, 204); -webkit-text-stroke: 0.2px rgb(53, 101, 204); transform: scaleX(1.0267);">0</span>
<span class="t" style="left: 1039.75px; top: 118.97px; font-size: 21px; color: rgb(77, 88, 106); -webkit-text-stroke: 0.2px rgb(77, 88, 106); letter-spacing: 0.498px; transform: scaleX(1.06);">May 02 2024, 12:23</span>
<span class="t" style="left: 1039.75px; top: 148.97px; font-size: 21px; color: rgb(77, 88, 106); -webkit-text-stroke: 0.2px rgb(77, 88, 106); transform: scaleX(1.0317);">AM</span>
<span class="t" style="left: 1350px; top: 118.97px; font-size: 21px; color: rgb(77, 88, 106); -webkit-text-stroke: 0.2px rgb(77, 88, 106); letter-spacing: 0.535px; transform: scaleX(1.06);">Jan 02 2023, 11:57</span>
<span class="t" style="left: 1350px; top: 148.97px; font-size: 21px; color: rgb(77, 88, 106); -webkit-text-stroke: 0.2px rgb(77, 88, 106); transform: scaleX(1.0317);">AM</span>
<svg style="left:1692px;top:136.0px" width="11" height="17" viewBox="0 0 11 17" fill="none" stroke="#344054" stroke-width="1.7" stroke-linecap="round" stroke-linejoin="round"><path d="M1.5 1.2 L9.3 8.5 L1.5 15.8"></path></svg>
<svg style="left:1828px;top:131.5px" width="8" height="26" viewBox="0 0 8 26" fill="#2b3445"><circle cx="4" cy="3.75" r="3"></circle><circle cx="4" cy="13" r="3"></circle><circle cx="4" cy="22.25" r="3"></circle></svg>
<div class="a rb" style="top:299.00px"></div>
<span class="t" style="left: 36px; top: 242.22px; font-size: 21px; color: rgb(16, 24, 40); -webkit-text-stroke: 0.22px rgb(16, 24, 40); letter-spacing: 0.582px; transform: scaleX(1.06);">Copy - Appointment</span>
<svg style="left:256.5px;top:238.2px" width="20" height="20" viewBox="0 0 20 20" fill="none" stroke="#525b6b" stroke-width="1.6" stroke-linecap="round" stroke-linejoin="round"><path d="M16.6 11.5 V15.4 Q16.6 18.8 13.2 18.8 H4.4 Q1 18.8 1 15.4 V6.8 Q1 3.4 4.4 3.4 H8.5"></path><path d="M12.2 1 H19 V7.8 M19 1 L9.4 10.6"></path></svg>
<div class="a dr" style="left:468.75px;top:226.95px"></div>
<span class="t" style="left: 483.25px; top: 238.71px; font-size: 18px; color: rgb(52, 64, 84); -webkit-text-stroke: 0.3px rgb(52, 64, 84); transform: scaleX(1.0573);">Draft</span>
<span class="t" style="left: 654.75px; top: 237.17px; font-size: 21px; color: rgb(53, 101, 204); -webkit-text-stroke: 0.2px rgb(53, 101, 204); transform: scaleX(1.0267);">0</span>
<span class="t" style="left: 841.5px; top: 237.17px; font-size: 21px; color: rgb(53, 101, 204); -webkit-text-stroke: 0.2px rgb(53, 101, 204); transform: scaleX(1.0267);">0</span>
<span class="t" style="left: 1039.75px; top: 237.17px; font-size: 21px; color: rgb(77, 88, 106); -webkit-text-stroke: 0.2px rgb(77, 88, 106); letter-spacing: 0.42px; transform: scaleX(1.06);">Nov 09 2024, 1:09 AM</span>
<span class="t" style="left: 1350px; top: 237.17px; font-size: 21px; color: rgb(77, 88, 106); -webkit-text-stroke: 0.2px rgb(77, 88, 106); letter-spacing: 0.42px; transform: scaleX(1.06);">Nov 09 2024, 1:09 AM</span>
<svg style="left:1692px;top:239.2px" width="11" height="17" viewBox="0 0 11 17" fill="none" stroke="#344054" stroke-width="1.7" stroke-linecap="round" stroke-linejoin="round"><path d="M1.5 1.2 L9.3 8.5 L1.5 15.8"></path></svg>
<svg style="left:1828px;top:234.7px" width="8" height="26" viewBox="0 0 8 26" fill="#2b3445"><circle cx="4" cy="3.75" r="3"></circle><circle cx="4" cy="13" r="3"></circle><circle cx="4" cy="22.25" r="3"></circle></svg>
<div class="a rb" style="top:408.00px"></div>
<span class="t" style="left: 36px; top: 346.72px; font-size: 21px; color: rgb(16, 24, 40); -webkit-text-stroke: 0.22px rgb(16, 24, 40); letter-spacing: 0.182px; transform: scaleX(1.06);">Demo Workflow</span>
<svg style="left:209.5px;top:342.8px" width="20" height="20" viewBox="0 0 20 20" fill="none" stroke="#525b6b" stroke-width="1.6" stroke-linecap="round" stroke-linejoin="round"><path d="M16.6 11.5 V15.4 Q16.6 18.8 13.2 18.8 H4.4 Q1 18.8 1 15.4 V6.8 Q1 3.4 4.4 3.4 H8.5"></path><path d="M12.2 1 H19 V7.8 M19 1 L9.4 10.6"></path></svg>
<div class="a pub" style="left:468.75px;top:332.75px"></div>
<span class="t" style="left: 483.25px; top: 344.51px; font-size: 18px; color: rgb(31, 157, 90); -webkit-text-stroke: 0.3px rgb(31, 157, 90); letter-spacing: 0.052px; transform: scaleX(1.06);">Published</span>
<span class="t" style="left: 654.75px; top: 342.97px; font-size: 21px; color: rgb(53, 101, 204); -webkit-text-stroke: 0.2px rgb(53, 101, 204); transform: scaleX(1.0267);">0</span>
<span class="t" style="left: 841.5px; top: 342.97px; font-size: 21px; color: rgb(53, 101, 204); -webkit-text-stroke: 0.2px rgb(53, 101, 204); transform: scaleX(1.0267);">0</span>
<span class="t" style="left: 1039.75px; top: 342.97px; font-size: 21px; color: rgb(77, 88, 106); -webkit-text-stroke: 0.2px rgb(77, 88, 106); letter-spacing: 0.468px; transform: scaleX(1.06);">Dec 25 2024, 8:00 AM</span>
<span class="t" style="left: 1350px; top: 327.97px; font-size: 21px; color: rgb(77, 88, 106); -webkit-text-stroke: 0.2px rgb(77, 88, 106); letter-spacing: 0.501px; transform: scaleX(1.06);">May 02 2024, 12:15</span>
<span class="t" style="left: 1350px; top: 357.97px; font-size: 21px; color: rgb(77, 88, 106); -webkit-text-stroke: 0.2px rgb(77, 88, 106); transform: scaleX(1.0317);">AM</span>
<svg style="left:1692px;top:345.0px" width="11" height="17" viewBox="0 0 11 17" fill="none" stroke="#344054" stroke-width="1.7" stroke-linecap="round" stroke-linejoin="round"><path d="M1.5 1.2 L9.3 8.5 L1.5 15.8"></path></svg>
<svg style="left:1828px;top:340.5px" width="8" height="26" viewBox="0 0 8 26" fill="#2b3445"><circle cx="4" cy="3.75" r="3"></circle><circle cx="4" cy="13" r="3"></circle><circle cx="4" cy="22.25" r="3"></circle></svg>
<div class="a rb" style="top:517.00px"></div>
<span class="t" style="left: 36px; top: 455.72px; font-size: 21px; color: rgb(16, 24, 40); -webkit-text-stroke: 0.22px rgb(16, 24, 40); letter-spacing: 0.182px; transform: scaleX(1.06);">Demo Workflow</span>
<svg style="left:209.5px;top:451.8px" width="20" height="20" viewBox="0 0 20 20" fill="none" stroke="#525b6b" stroke-width="1.6" stroke-linecap="round" stroke-linejoin="round"><path d="M16.6 11.5 V15.4 Q16.6 18.8 13.2 18.8 H4.4 Q1 18.8 1 15.4 V6.8 Q1 3.4 4.4 3.4 H8.5"></path><path d="M12.2 1 H19 V7.8 M19 1 L9.4 10.6"></path></svg>
<div class="a dr" style="left:468.75px;top:441.75px"></div>
<span class="t" style="left: 483.25px; top: 453.51px; font-size: 18px; color: rgb(52, 64, 84); -webkit-text-stroke: 0.3px rgb(52, 64, 84); transform: scaleX(1.0573);">Draft</span>
<span class="t" style="left:654.75px;top:451.97px;font-size:21px;color:#3565cc;-webkit-text-stroke:0.2px #3565cc;">1</span>
<span class="t" style="left: 841.5px; top: 451.97px; font-size: 21px; color: rgb(53, 101, 204); -webkit-text-stroke: 0.2px rgb(53, 101, 204); transform: scaleX(1.0267);">0</span>
<span class="t" style="left: 1039.75px; top: 436.97px; font-size: 21px; color: rgb(77, 88, 106); -webkit-text-stroke: 0.2px rgb(77, 88, 106); letter-spacing: 0.512px; transform: scaleX(1.06);">May 02 2024, 12:50</span>
<span class="t" style="left: 1039.75px; top: 466.97px; font-size: 21px; color: rgb(77, 88, 106); -webkit-text-stroke: 0.2px rgb(77, 88, 106); transform: scaleX(1.0317);">AM</span>
<span class="t" style="left: 1350px; top: 436.97px; font-size: 21px; color: rgb(77, 88, 106); -webkit-text-stroke: 0.2px rgb(77, 88, 106); letter-spacing: 0.512px; transform: scaleX(1.06);">May 02 2024, 12:24</span>
<span class="t" style="left: 1350px; top: 466.97px; font-size: 21px; color: rgb(77, 88, 106); -webkit-text-stroke: 0.2px rgb(77, 88, 106); transform: scaleX(1.0317);">AM</span>
<svg style="left:1692px;top:454.0px" width="11" height="17" viewBox="0 0 11 17" fill="none" stroke="#344054" stroke-width="1.7" stroke-linecap="round" stroke-linejoin="round"><path d="M1.5 1.2 L9.3 8.5 L1.5 15.8"></path></svg>
<svg style="left:1828px;top:449.5px" width="8" height="26" viewBox="0 0 8 26" fill="#2b3445"><circle cx="4" cy="3.75" r="3"></circle><circle cx="4" cy="13" r="3"></circle><circle cx="4" cy="22.25" r="3"></circle></svg>
<div class="a rb" style="top:626.00px"></div>
<span class="t" style="left: 36px; top: 564.72px; font-size: 21px; color: rgb(16, 24, 40); -webkit-text-stroke: 0.22px rgb(16, 24, 40); letter-spacing: 0.104px; transform: scaleX(1.06);">Interested</span>
<svg style="left:150.5px;top:560.8px" width="20" height="20" viewBox="0 0 20 20" fill="none" stroke="#525b6b" stroke-width="1.6" stroke-linecap="round" stroke-linejoin="round"><path d="M16.6 11.5 V15.4 Q16.6 18.8 13.2 18.8 H4.4 Q1 18.8 1 15.4 V6.8 Q1 3.4 4.4 3.4 H8.5"></path><path d="M12.2 1 H19 V7.8 M19 1 L9.4 10.6"></path></svg>
<div class="a pub" style="left:468.75px;top:550.75px"></div>
<span class="t" style="left: 483.25px; top: 562.51px; font-size: 18px; color: rgb(31, 157, 90); -webkit-text-stroke: 0.3px rgb(31, 157, 90); letter-spacing: 0.052px; transform: scaleX(1.06);">Published</span>
<span class="t" style="left: 654.75px; top: 560.97px; font-size: 21px; color: rgb(53, 101, 204); -webkit-text-stroke: 0.2px rgb(53, 101, 204); letter-spacing: 1.169px; transform: scaleX(1.06);">44</span>
<span class="t" style="left: 841.5px; top: 560.97px; font-size: 21px; color: rgb(53, 101, 204); -webkit-text-stroke: 0.2px rgb(53, 101, 204); transform: scaleX(1.0267);">0</span>
<span class="t" style="left: 1039.75px; top: 545.97px; font-size: 21px; color: rgb(77, 88, 106); -webkit-text-stroke: 0.2px rgb(77, 88, 106); letter-spacing: 0.557px; transform: scaleX(1.06);">Jan 02 2023, 11:58</span>
<span class="t" style="left: 1039.75px; top: 575.97px; font-size: 21px; color: rgb(77, 88, 106); -webkit-text-stroke: 0.2px rgb(77, 88, 106); transform: scaleX(1.0317);">AM</span>
<span class="t" style="left: 1350px; top: 545.97px; font-size: 21px; color: rgb(77, 88, 106); -webkit-text-stroke: 0.2px rgb(77, 88, 106); letter-spacing: 0.535px; transform: scaleX(1.06);">Jan 02 2023, 11:57</span>
<span class="t" style="left: 1350px; top: 575.97px; font-size: 21px; color: rgb(77, 88, 106); -webkit-text-stroke: 0.2px rgb(77, 88, 106); transform: scaleX(1.0317);">AM</span>
<svg style="left:1692px;top:563.0px" width="11" height="17" viewBox="0 0 11 17" fill="none" stroke="#344054" stroke-width="1.7" stroke-linecap="round" stroke-linejoin="round"><path d="M1.5 1.2 L9.3 8.5 L1.5 15.8"></path></svg>
<svg style="left:1828px;top:558.5px" width="8" height="26" viewBox="0 0 8 26" fill="#2b3445"><circle cx="4" cy="3.75" r="3"></circle><circle cx="4" cy="13" r="3"></circle><circle cx="4" cy="22.25" r="3"></circle></svg>
<div class="a rb" style="top:735.00px"></div>
<span class="t" style="left: 36px; top: 673.72px; font-size: 21px; color: rgb(16, 24, 40); -webkit-text-stroke: 0.22px rgb(16, 24, 40); transform: scaleX(1.0274);">Lead</span>
<svg style="left:98.5px;top:669.8px" width="20" height="20" viewBox="0 0 20 20" fill="none" stroke="#525b6b" stroke-width="1.6" stroke-linecap="round" stroke-linejoin="round"><path d="M16.6 11.5 V15.4 Q16.6 18.8 13.2 18.8 H4.4 Q1 18.8 1 15.4 V6.8 Q1 3.4 4.4 3.4 H8.5"></path><path d="M12.2 1 H19 V7.8 M19 1 L9.4 10.6"></path></svg>
<div class="a pub" style="left:468.75px;top:659.75px"></div>
<span class="t" style="left: 483.25px; top: 671.51px; font-size: 18px; color: rgb(31, 157, 90); -webkit-text-stroke: 0.3px rgb(31, 157, 90); letter-spacing: 0.052px; transform: scaleX(1.06);">Published</span>
<span class="t" style="left: 654.75px; top: 669.97px; font-size: 21px; color: rgb(53, 101, 204); -webkit-text-stroke: 0.2px rgb(53, 101, 204); letter-spacing: 1.169px; transform: scaleX(1.06);">46</span>
<span class="t" style="left: 841.5px; top: 669.97px; font-size: 21px; color: rgb(53, 101, 204); -webkit-text-stroke: 0.2px rgb(53, 101, 204); transform: scaleX(1.0267);">0</span>
<span class="t" style="left: 1039.75px; top: 654.97px; font-size: 21px; color: rgb(77, 88, 106); -webkit-text-stroke: 0.2px rgb(77, 88, 106); letter-spacing: 0.557px; transform: scaleX(1.06);">Jan 02 2023, 11:58</span>
<span class="t" style="left: 1039.75px; top: 684.97px; font-size: 21px; color: rgb(77, 88, 106); -webkit-text-stroke: 0.2px rgb(77, 88, 106); transform: scaleX(1.0317);">AM</span>
<span class="t" style="left: 1350px; top: 654.97px; font-size: 21px; color: rgb(77, 88, 106); -webkit-text-stroke: 0.2px rgb(77, 88, 106); letter-spacing: 0.535px; transform: scaleX(1.06);">Jan 02 2023, 11:57</span>
<span class="t" style="left: 1350px; top: 684.97px; font-size: 21px; color: rgb(77, 88, 106); -webkit-text-stroke: 0.2px rgb(77, 88, 106); transform: scaleX(1.0317);">AM</span>
<svg style="left:1692px;top:672.0px" width="11" height="17" viewBox="0 0 11 17" fill="none" stroke="#344054" stroke-width="1.7" stroke-linecap="round" stroke-linejoin="round"><path d="M1.5 1.2 L9.3 8.5 L1.5 15.8"></path></svg>
<svg style="left:1828px;top:667.5px" width="8" height="26" viewBox="0 0 8 26" fill="#2b3445"><circle cx="4" cy="3.75" r="3"></circle><circle cx="4" cy="13" r="3"></circle><circle cx="4" cy="22.25" r="3"></circle></svg>
<div class="a rb" style="top:835.00px"></div>
<span class="t" style="left: 36px; top: 778.22px; font-size: 21px; color: rgb(16, 24, 40); -webkit-text-stroke: 0.22px rgb(16, 24, 40); transform: scaleX(1.0461);">Manual Call</span>
<svg style="left:166.5px;top:774.2px" width="20" height="20" viewBox="0 0 20 20" fill="none" stroke="#525b6b" stroke-width="1.6" stroke-linecap="round" stroke-linejoin="round"><path d="M16.6 11.5 V15.4 Q16.6 18.8 13.2 18.8 H4.4 Q1 18.8 1 15.4 V6.8 Q1 3.4 4.4 3.4 H8.5"></path><path d="M12.2 1 H19 V7.8 M19 1 L9.4 10.6"></path></svg>
<div class="a pub" style="left:468.75px;top:762.95px"></div>
<span class="t" style="left: 483.25px; top: 774.71px; font-size: 18px; color: rgb(31, 157, 90); -webkit-text-stroke: 0.3px rgb(31, 157, 90); letter-spacing: 0.052px; transform: scaleX(1.06);">Published</span>
<span class="t" style="left: 654.75px; top: 773.17px; font-size: 21px; color: rgb(53, 101, 204); -webkit-text-stroke: 0.2px rgb(53, 101, 204); transform: scaleX(1.0267);">0</span>
<span class="t" style="left: 841.5px; top: 773.17px; font-size: 21px; color: rgb(53, 101, 204); -webkit-text-stroke: 0.2px rgb(53, 101, 204); transform: scaleX(1.0267);">0</span>
<span class="t" style="left: 1039.75px; top: 773.17px; font-size: 21px; color: rgb(77, 88, 106); -webkit-text-stroke: 0.2px rgb(77, 88, 106); letter-spacing: 0.398px; transform: scaleX(1.06);">Jul 17 2024, 5:36 PM</span>
<span class="t" style="left: 1350px; top: 773.17px; font-size: 21px; color: rgb(77, 88, 106); -webkit-text-stroke: 0.2px rgb(77, 88, 106); letter-spacing: 0.398px; transform: scaleX(1.06);">Jul 17 2024, 4:00 PM</span>
<svg style="left:1692px;top:775.2px" width="11" height="17" viewBox="0 0 11 17" fill="none" stroke="#344054" stroke-width="1.7" stroke-linecap="round" stroke-linejoin="round"><path d="M1.5 1.2 L9.3 8.5 L1.5 15.8"></path></svg>
<svg style="left:1828px;top:770.7px" width="8" height="26" viewBox="0 0 8 26" fill="#2b3445"><circle cx="4" cy="3.75" r="3"></circle><circle cx="4" cy="13" r="3"></circle><circle cx="4" cy="22.25" r="3"></circle></svg>
<span class="t" style="left: 36px; top: 862.62px; font-size: 21px; color: rgb(16, 24, 40); -webkit-text-stroke: 0.22px rgb(16, 24, 40); letter-spacing: 0.617px; transform: scaleX(1.06);">New Workflow : 1720959510445</span>
</div>
<div class="a" style="left:2856px;top:158px;width:24px;height:1209px;background:#fbfcfd"></div>
<svg style="left:2861px;top:164px" width="14" height="12" viewBox="0 0 14 12"><path d="M7.3 2 L13.4 10.6 H1.2 Z" fill="#8a8a8a" stroke="#8a8a8a" stroke-width="1.6" stroke-linejoin="round"></path></svg>
<div class="a" style="left:2862px;top:185px;width:13px;height:859px;background:#8b8b8b;border-radius:6.5px"></div>
<div class="a" style="left:2778px;top:1208px;width:72px;height:72px;border-radius:50%;background:#1a80e0;box-shadow:0 2px 18px rgba(0,0,0,.10)"></div>
<svg style="left:2796px;top:1218px" width="40" height="54" viewBox="0 0 40 54"><defs><linearGradient id="qg" x1="0" y1="0" x2="0" y2="1"><stop offset="0" stop-color="#ff9a3c"></stop><stop offset=".4" stop-color="#ff3b45"></stop><stop offset="1" stop-color="#46288a"></stop></linearGradient></defs>
<g transform="translate(6.4,0) scale(.8,1)" font-family="Liberation Sans, sans-serif" font-weight="700" font-size="50" stroke-linejoin="round"><text x="0" y="44.4" fill="#a9c8ff" stroke="#a9c8ff" stroke-width="3.6">?</text><text x="0" y="44.4" fill="url(#qg)" stroke="url(#qg)" stroke-width="1.2">?</text></g></svg>
<div class="a" style="left:295px;top:1285px;width:51px;height:51px;border-radius:9px;background:#fff;box-shadow:0 1px 5px rgba(16,24,40,.18)"></div>
<svg style="left:314px;top:1301px" width="13" height="21" viewBox="0 0 13 21" fill="none" stroke="#0c111d" stroke-width="2.6" stroke-linecap="round" stroke-linejoin="round"><path d="M11 1.5 L2 10.5 L11 19.5"></path></svg>
<div class="a" style="left:2286px;top:159.5px;width:144.5px;height:144.5px;border-radius:50%;background:rgba(0,0,0,.4)"></div>
<div class="a" style="left:2323.5px;top:196.5px;width:69px;height:69px;border-radius:50%;background:#000"></div>

</body></html>
